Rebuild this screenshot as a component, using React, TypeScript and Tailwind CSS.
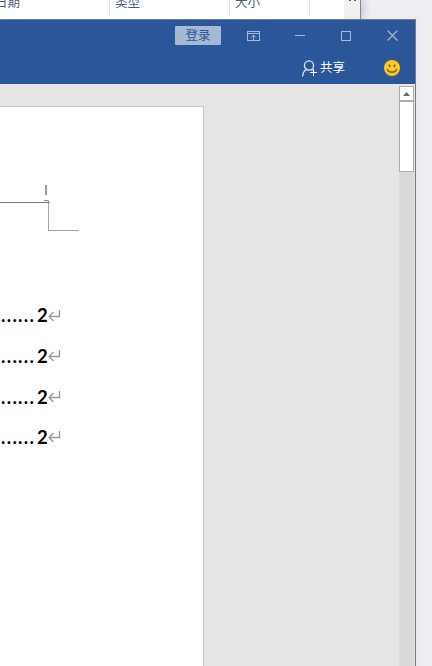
import React from 'react';

const columns = [
  { label: '日期', cell: 'w-[110px]', text: '-ml-[5px]' },
  { label: '类型', cell: 'w-[120px]', text: 'ml-[5px]' },
  { label: '大小', cell: 'w-[80px]', text: 'ml-[5px]' },
];

function ExplorerStrip() {
  return (
    <div className="flex h-[19px] w-[361px] overflow-hidden border-r border-[#88888c] bg-white text-[12.5px] text-[#4c607a] shadow-[2px_0_8px_rgba(0,0,0,0.2)]">
      {columns.map((c) => (
        <div key={c.label} className={`${c.cell} h-4 shrink-0 border-r border-[#e5e5e5]`}>
          <div className={`${c.text} -mt-[6px] leading-[18px] whitespace-nowrap`}>{c.label}</div>
        </div>
      ))}
      <div className="ml-auto flex w-4 justify-center gap-[3px] bg-[#f0f0f0]">
        <span className="h-px w-[2px] bg-[#606060]" />
        <span className="h-px w-[2px] bg-[#606060]" />
      </div>
    </div>
  );
}

function TitleBar() {
  return (
    <div className="flex h-[31px] items-center text-[#a6bbd9]">
      <div className="ml-[175px] flex h-[19px] w-[46px] items-center justify-center rounded-[1px] bg-[#a5b8d4] pt-[2px] text-[12.5px] leading-none text-[#2b579a]">
        登录
      </div>
      <svg className="ml-[26px]" width="13" height="10" viewBox="0 0 13 10" fill="none" stroke="currentColor" shapeRendering="crispEdges">
        <path d="M.5.5h12v9H.5zM1 2.5h11M6.5 4v5" />
        <path d="M4 6.500 6.500 4 9 6.500" shapeRendering="auto" />
      </svg>
      <div className="ml-[35px] h-px w-[10px] bg-[#a6bbd9]" />
      <div className="ml-9 h-[10px] w-[10px] border border-[#a6bbd9]" />
      <svg className="ml-9" width="11" height="11" viewBox="0 0 11 11" fill="none" stroke="currentColor" strokeWidth="1.1">
        <path d="m.5.5 10 10M10.500.5l-10 10" />
      </svg>
    </div>
  );
}

function ShareBar() {
  return (
    <div className="flex h-[33px] items-center">
      <svg className="ml-[302px] mt-[2px]" width="16" height="17" viewBox="0 0 16 17" fill="none" stroke="#dce6f3" strokeWidth="1.3">
        <circle cx="7" cy="5.5" r="4.6" />
        <path d="M.7 16.500C.7 12.700 2.200 10.800 4.500 9.500M9.300 9.500l1.300 1" />
        <path d="M11.500 9v7M8 12.500h7" stroke="#fff" strokeWidth="1" />
      </svg>
      <span className="ml-[2px] pt-[2px] text-[12.5px] leading-none text-white">共享</span>
      <svg className="ml-auto mr-[15px]" width="16" height="16" viewBox="0 0 16 16">
        <circle cx="8" cy="8" r="8" fill="#fccb16" />
        <ellipse cx="5.500" cy="5.800" rx="0.900" ry="1.500" fill="#6b5d2d" />
        <ellipse cx="10.500" cy="5.800" rx="0.900" ry="1.500" fill="#6b5d2d" />
        <path d="M3.300 9c1 4.200 8.400 4.200 9.400 0" fill="none" stroke="#6b5d2d" strokeWidth="1.200" />
      </svg>
    </div>
  );
}

function ContentsRow() {
  return (
    <div className="flex h-[40.6px] items-center font-['Lato',sans-serif] text-[18.500px] font-bold leading-none text-black">
      <span className="w-[37px] shrink-0 whitespace-nowrap pl-px tracking-[1.300px]">......</span>
      <span className="w-[11px]">2</span>
      <svg width="13" height="12" viewBox="0 0 13 12" fill="none" stroke="#999999" strokeWidth="1.300">
        <path d="M11.500 0v6.500H1M5.500 2l-4.500 4.500 4.500 4.500" />
      </svg>
    </div>
  );
}

function Page() {
  return (
    <div className="mt-[22px] h-[560px] w-[204px] border-r border-t border-[#c6c6c6] bg-white">
      <svg className="mb-[0.400px] block" width="100" height="188" viewBox="0 0 100 188" shapeRendering="crispEdges">
        <rect x="45" y="78" width="2" height="10" fill="#9a9a9a" />
        <rect x="44" y="93" width="5" height="1" fill="#8a8a8a" />
        <rect x="0" y="95" width="50" height="1" fill="#777777" />
        <path d="M48.500 93v30.500H79" fill="none" stroke="#a5a5a5" />
      </svg>
      {[0, 1, 2, 3].map((i) => (
        <ContentsRow key={i} />
      ))}
    </div>
  );
}

function Scrollbar() {
  return (
    <div className="mr-[1px] flex w-[15px] flex-col bg-[#dadada]">
      <div className="h-[2px] bg-[#e5e5e5]" />
      <div className="flex h-[15px] items-center justify-center border border-[#ababab] bg-white">
        <svg width="7" height="4" viewBox="0 0 7 4" fill="#6a6a6a">
          <path d="M3.500 0 7 4H0z" />
        </svg>
      </div>
      <div className="h-[71px] border border-[#ababab] bg-white" />
    </div>
  );
}

export default function App() {
  return (
    <div className="flex h-[666px] w-[432px] flex-col overflow-hidden bg-[#eeedf4] font-['Open_Sans','Noto_Sans_CJK_SC',sans-serif]">
      <ExplorerStrip />
      <div className="z-10 flex w-[416px] grow flex-col border-r border-t border-[#777b84] bg-[#e5e5e5] shadow-[1px_0_5px_rgba(0,0,0,0.040)]">
        <div className="h-16 shrink-0 bg-[#2b579a]">
          <TitleBar />
          <ShareBar />
        </div>
        <div className="flex min-h-0 grow justify-between overflow-hidden">
          <Page />
          <Scrollbar />
        </div>
      </div>
    </div>
  );
}
